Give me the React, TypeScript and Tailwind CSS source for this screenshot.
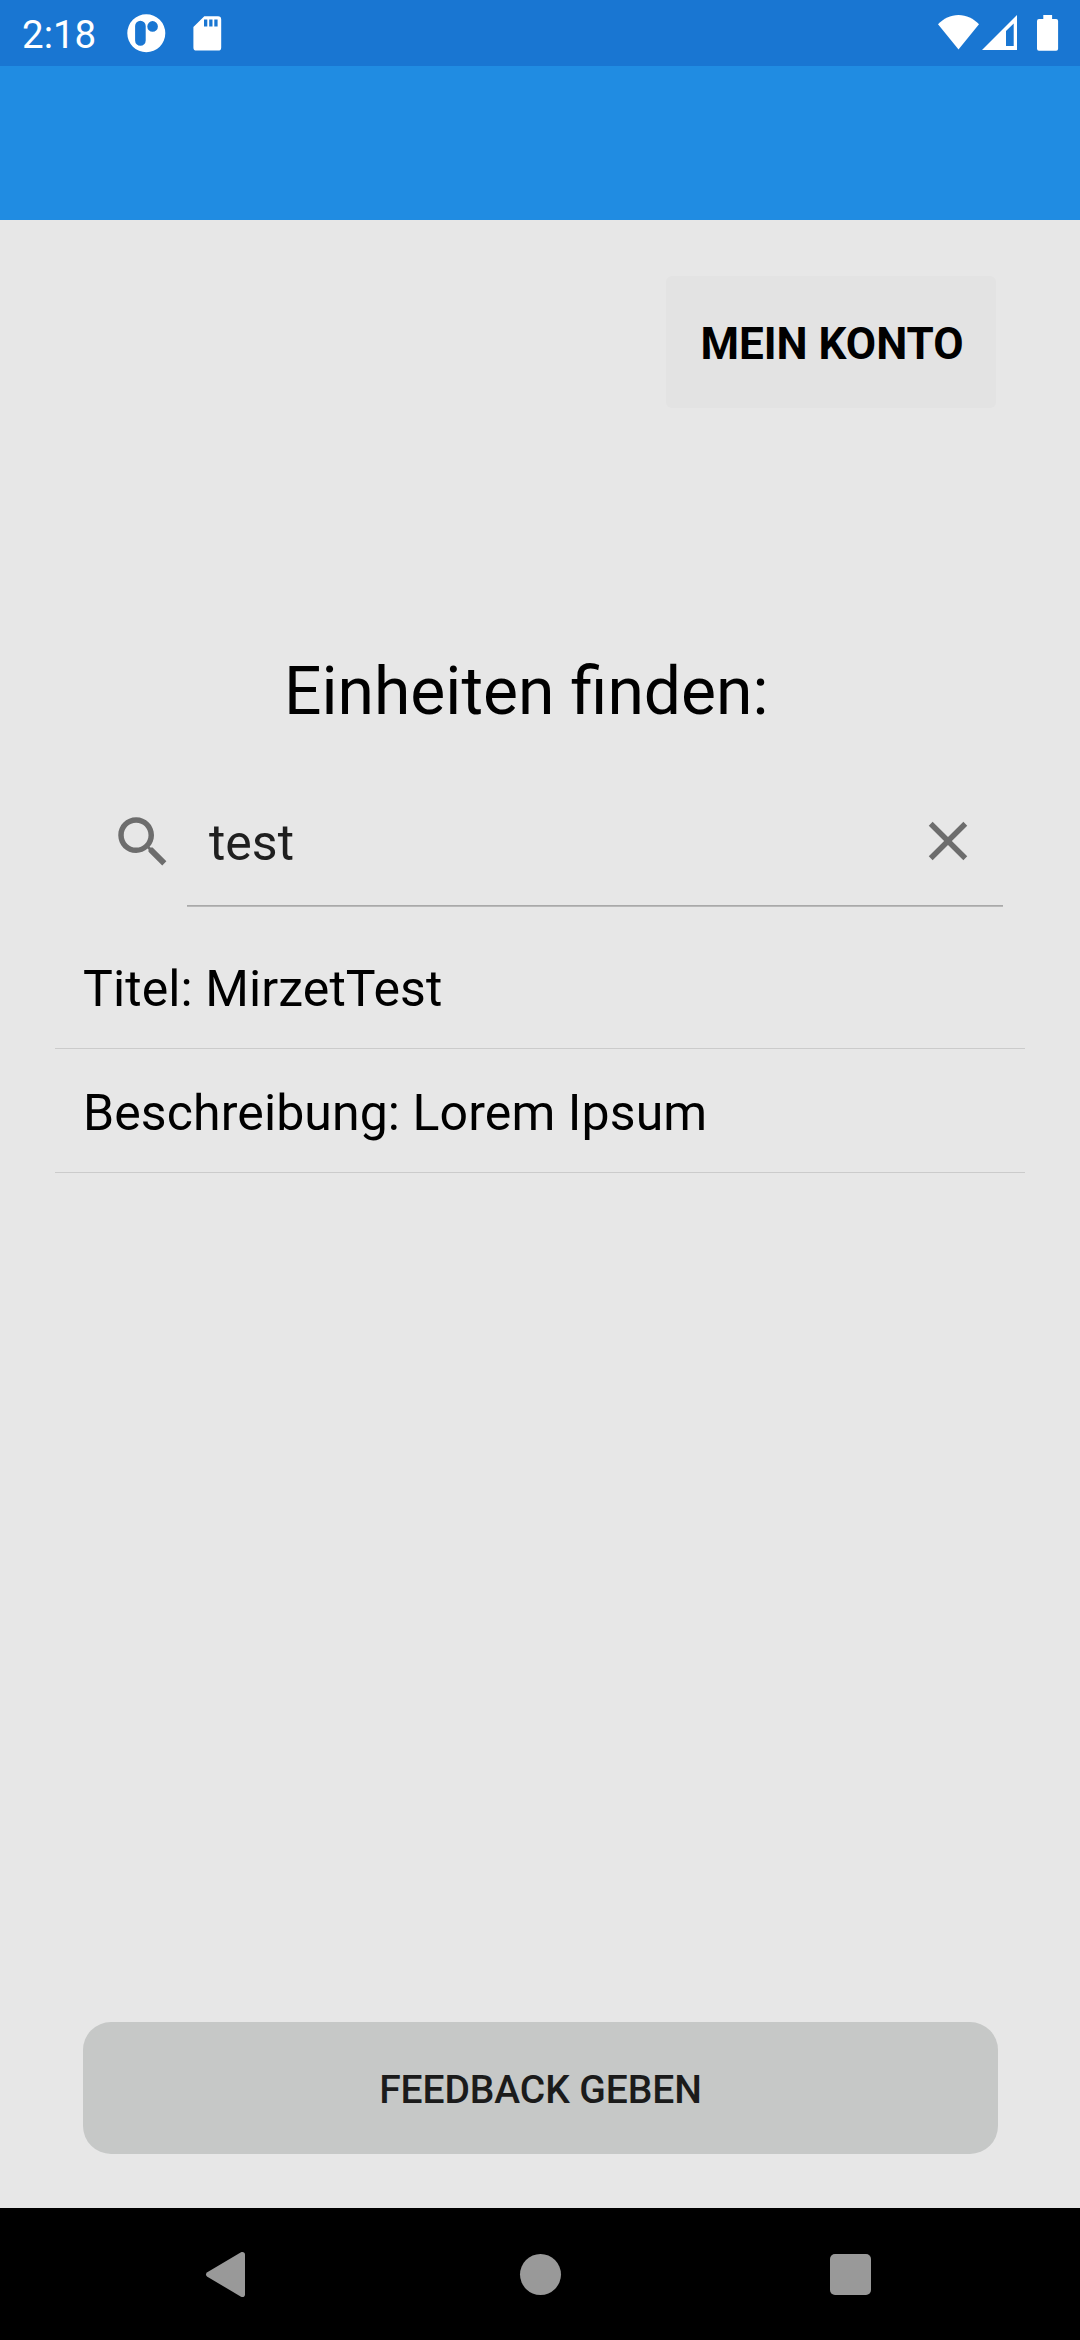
import React from "react";

function StatusBar() {
  return (
    <header className="flex h-[66px] items-start justify-between bg-[#1976d2] text-white">
      <div className="flex">
        <span className="ml-[22px] mt-[12px] w-[78px] whitespace-nowrap text-[38.5px] leading-[46px]">2:18</span>
        <svg className="ml-[20px] h-[66px] w-[52px]" viewBox="120 0 52 66" aria-hidden="true">
          <path
            fill="currentColor"
            fillRule="evenodd"
            d="M146.3 14.2a19 19 0 1 0 0 38a19 19 0 1 0 0-38z M140.4 20.8a5.3 5.3 0 0 1 5.3 5.3v14.3a5.3 5.3 0 0 1-10.6 0V26.1a5.3 5.3 0 0 1 5.3-5.3z M152.6 21.1a5.2 5.2 0 1 1 0 10.6a5.2 5.2 0 1 1 0-10.6z"
          />
        </svg>
        <svg className="ml-[13px] h-[66px] w-[44px]" viewBox="185 0 44 66" aria-hidden="true">
          <path
            fill="currentColor"
            fillRule="evenodd"
            d="M204.3 16.2H218a3.2 3.2 0 0 1 3.2 3.2V47.4a3.2 3.2 0 0 1-3.2 3.2H196.6a3.2 3.2 0 0 1-3.2-3.2V27.1z M204 19.6h3.3v7H204z M209.2 19.6h3.3v7h-3.3z M214.3 19.6h3.3v7h-3.3z"
          />
        </svg>
      </div>
      <svg className="h-[66px] w-[150px]" viewBox="930 0 150 66" fill="currentColor" aria-hidden="true">
        <path d="M958.5 49.5L938 24.3C943.5 18.8 950.5 15.1 958.5 15.1S973.5 18.8 979 24.3z" />
        <path fillRule="evenodd" d="M982 50L1017 15V50z M1006 31V46H1013.7V23.6z" />
        <path d="M1043.3 15h8.8v4h4a2 2 0 0 1 2 2v27.7a2 2 0 0 1-2 2H1039a2 2 0 0 1-2-2V21a2 2 0 0 1 2-2h4.3z" />
      </svg>
    </header>
  );
}

function SearchField() {
  return (
    <div className="mt-[28px] flex h-[149px] pl-[110px] pr-[77px]">
      <svg className="mt-[51px] size-[66px] shrink-0 text-[#6d6d6d]" viewBox="0 0 24 24" fill="currentColor" aria-hidden="true">
        <path d="M15.5,14l-0.8,0l-0.3,-0.3c1,-1.1 1.6,-2.6 1.6,-4.2C16,5.9 13.1,3 9.5,3C5.9,3 3,5.9 3,9.5S5.9,16 9.5,16c1.6,0 3.1,-0.6 4.2,-1.6l0.3,0.3l0,0.8l5,5l1.5,-1.5L15.5,14z M9.5,14C7,14 5,12 5,9.5S7,5 9.5,5C12,5 14,7 14,9.5S12,14 9.5,14z" />
      </svg>
      <div className="ml-[11px] flex flex-1 justify-between border-b border-[#b9b9b9] pl-[22px] pr-[22px] shadow-[inset_0_-1px_0_#a9a9a9]">
        <span className="mt-[56px] text-[50px] leading-[58px] text-[#1f1f1f]">test</span>
        <svg className="mt-[50px] size-[66px] text-[#6d6d6d]" viewBox="0 0 24 24" fill="currentColor" aria-hidden="true">
          <path d="M19 6.41L17.59 5 12 10.59 6.41 5 5 6.41 10.59 12 5 17.59 6.41 19 12 13.41 17.59 19 19 17.59 13.41 12z" />
        </svg>
      </div>
    </div>
  );
}

function ResultRow({ children }: { children: React.ReactNode }) {
  return (
    <li className="flex h-[124px] items-center border-b border-[#cbcbcb] pl-[28px] pt-[5px] text-[50px] leading-[58px] tracking-[0.1px]">
      <span className="whitespace-nowrap">{children}</span>
    </li>
  );
}

function NavigationBar() {
  return (
    <nav className="flex h-[132px] items-center bg-black text-[#999999]">
      <svg className="ml-[204px] h-[132px] w-[44px]" viewBox="204 2208 44 132" fill="currentColor" aria-hidden="true">
        <path d="M207.3 2272.3L241 2252.3C243 2251.4 245 2252.4 245 2254.6V2294.4C245 2296.6 243 2297.6 241 2296.7L207.3 2276.7C205.6 2275.5 205.6 2273.5 207.3 2272.3z" />
      </svg>
      <span className="ml-[271.5px] size-[41px] rounded-full bg-current" />
      <span className="ml-[269.5px] mt-[1px] size-[41px] rounded-[5px] bg-current" />
    </nav>
  );
}

export default function App() {
  return (
    <div className="flex h-[2340px] w-[1080px] flex-col overflow-hidden bg-[#e7e7e7] font-['Roboto',sans-serif] text-black">
      <StatusBar />
      <div className="h-[154px] bg-[#208ce2]" />
      <main className="flex flex-1 flex-col">
        <button className="ml-[666px] mt-[56px] h-[132px] w-[330px] whitespace-nowrap rounded-[6px] bg-[#e3e3e3] pl-[2px] pt-[4px] text-[44px] font-bold leading-[52px]">
          MEIN KONTO
        </button>
        <h1 className="ml-[284px] mt-[245px] h-[77px] whitespace-nowrap text-[66px] leading-[78px]">Einheiten finden:</h1>
        <SearchField />
        <ul className="mx-[55px] mt-[18px]">
          <ResultRow>Titel: MirzetTest</ResultRow>
          <ResultRow>Beschreibung: Lorem Ipsum</ResultRow>
        </ul>
        <button className="mb-[54px] ml-[83px] mt-auto h-[132px] w-[915px] rounded-[28px] bg-[#c6c8c7] pt-[4px] text-[39px] font-medium leading-[46px] tracking-[-0.1px] text-[#1b1b1b]">
          FEEDBACK GEBEN
        </button>
      </main>
      <NavigationBar />
    </div>
  );
}
